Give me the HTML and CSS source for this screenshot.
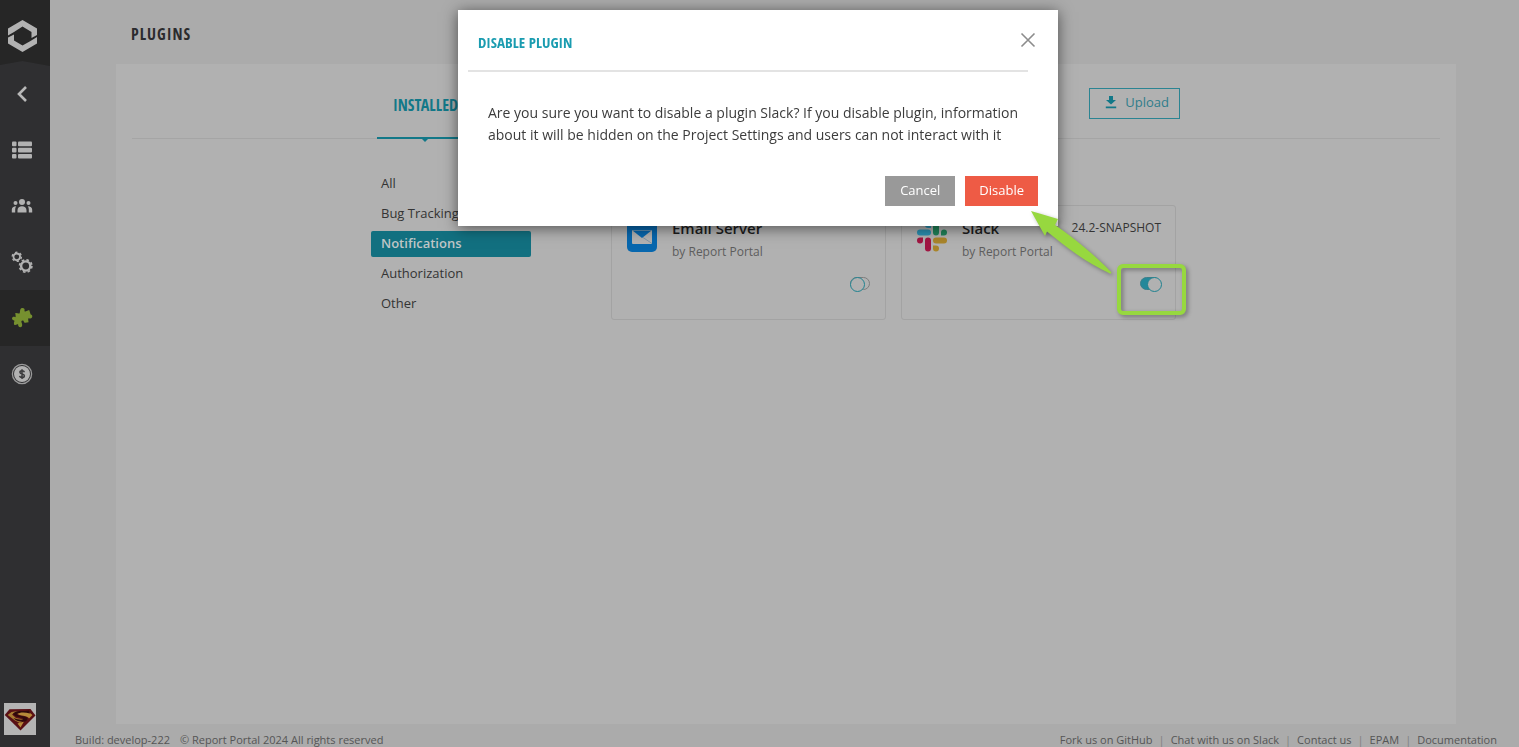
FILE: index.html
```
<!DOCTYPE html>
<html lang="en">
<head>
<meta charset="utf-8">
<title>Plugins</title>
<link rel="stylesheet" href="styles.css">
</head>
<body>
<div class="app">
  <nav class="sidebar" aria-label="Main">
    <a class="logo" href="#" aria-label="Home">
      <svg width="30" height="34" viewBox="0 0 30 34" fill="#b2b2b2"><path d="M0 9.600 14.500 1 29 9.600v6.400L23.500 19v-6L14.500 7.500 6 13 0 16.500z"/><path d="M29 24.500 14.500 33 0 24.500V18.500L6 15.500v6L14.500 26.500 22.500 22 29 18z"/></svg>
    </a>
    <a class="side-item" href="#" aria-label="Back"><svg width="12" height="18" viewBox="0 0 12 18" fill="none" stroke="#b8b8b8" stroke-width="2.600"><path d="M10 2 3 9l7 7"/></svg></a>
    <a class="side-item" href="#" aria-label="Projects"><svg width="22" height="18" viewBox="0 0 22 18" fill="#b2b2b2"><rect x="1" y=".6" width="4.500" height="4.600" rx="1"/><rect x="7" y=".6" width="14" height="4.600" rx="1"/><rect x="1" y="6.800" width="4.500" height="4.600" rx="1"/><rect x="7" y="6.800" width="14" height="4.600" rx="1"/><rect x="1" y="13" width="4.500" height="4.600" rx="1"/><rect x="7" y="13" width="14" height="4.600" rx="1"/></svg></a>
    <a class="side-item" href="#" aria-label="Users"><svg width="22" height="16" viewBox="0 0 22 16" fill="#b2b2b2"><circle cx="11" cy="4" r="3"/><circle cx="4.500" cy="5" r="2"/><circle cx="17.500" cy="5" r="2"/><path d="M6.500 14.500v-2.300c0-2.600 2-4 4.500-4s4.500 1.400 4.500 4v2.300zM.8 14.500v-2.700c0-2 1.600-3.500 4.400-3.500-.6.900-1 2-1 3.500v2.700zM21.200 14.500v-2.700c0-2-1.600-3.500-4.400-3.500.6.900 1 2 1 3.500v2.700z"/></svg></a>
    <a class="side-item" href="#" aria-label="Settings"><svg width="22" height="22" viewBox="0 0 22 22" fill="none" stroke="#b2b2b2"><circle cx="5.800" cy="5.800" r="3.300" stroke-width="1.800"/><circle cx="5.800" cy="5.800" r="4.600" stroke-width="1.400" stroke-dasharray="2.400 2.417"/><circle cx="14.700" cy="15" r="4.600" stroke-width="2.400"/><circle cx="14.700" cy="15" r="6.200" stroke-width="1.600" stroke-dasharray="2.600 2.269"/></svg></a>
    <a class="side-item active" href="#" aria-label="Plugins"><svg width="22" height="22" viewBox="0 0 22 22" fill="#76902f"><path d="M9 4c.2-1.300.6-2.700 2.200-2.900 1.800-.2 2.800 1 2.300 2.600-.1.600.2.900.8.700l3.900-1.500 1.300 4c.2.700.6.600 1 .9 1.200.9 1.100 3-.3 3.500-1.200.5-2-.5-2.700 0-.7.700 0 2.600.1 4-1.800.4-3.300.8-4.200.3-.9-.6-.2-2-1.600-2.200-1.600-.1-1.600 1.300-1.200 2.200.4 1.400 1 2.600.2 3.900-.7 1-2.600.9-3.300-.2-.5-.9 0-1.900-.6-2.100-1-.3-2.100.8-3.500.9-.5-1.400-.7-2.700-.2-3.400.3-.5.500-.8-.2-1.100-1.500-.4-2.200-1.200-1.900-2.500.4-1.600 2-1.700 2.900-1 .6.400.8-.3.600-1.300L4.300 6c1.400-.3 3.500.9 4.300.2C9 5.600 8.900 4.900 9 4z"/></svg></a>
    <a class="side-item" href="#" aria-label="Billing"><svg width="22" height="22" viewBox="0 0 22 22"><circle cx="11" cy="11" r="9.600" fill="none" stroke="#9b9b9b" stroke-width="1.300"/><circle cx="11" cy="11" r="8" fill="#b2b2b2"/><path d="M13.400 9.200c-.3-1.100-1.200-1.500-2.300-1.500-1.300 0-2.200.5-2.200 1.600 0 2.300 4.500 1.100 4.500 3.500 0 1.200-1 1.800-2.300 1.800s-2.300-.5-2.500-1.700M11 6.200v9.700" fill="none" stroke="#3b3b3d" stroke-width="1.500"/></svg></a>
    <a class="avatar" href="#" aria-label="Profile"><svg width="32" height="32" viewBox="0 0 32 32"><rect width="32" height="32" fill="#b4b4b4"/><path d="M5.500 6.300 26.500 6 31.500 12.500 16.500 27.500.7 12z" fill="#591015"/><path d="M7.500 9 14 8 8 11.500 12 15 20 16.500 16 20 11 17.500 3.700 12z" fill="#a77b31"/><path d="M13 8.500 24 8.500 28.500 12 25 15.500C24 12.500 15 13 13 10.500zM13.500 20.500 20 18.500 16.500 24.500z" fill="#b78939"/><path d="M9 10.500C14 6.500 18 9 25 7.500l1 3C20 9 16 9 12.500 11.500 17 14 24 12.500 23.500 16c-1 4-8 3-12 1l-2-2c5 1.500 9 2.500 9.500.8C19 14 10 14.500 9 10.500z" fill="#30090c"/></svg></a>
  </nav>

  <div class="page">
    <h1 class="page-title">PLUGINS</h1>
    <main class="panel">
      <div class="panel-head">
        <div class="wrap head-row">
          <a class="tab" href="#">INSTALLED</a>
          <button class="upload" type="button">
            <svg width="12" height="14" viewBox="0 0 12 14" fill="#127888"><path d="M4 1h4v4h3L6 9.500 1 5h3zM.8 11.500h10.400v1.800H.8z"/></svg>
            Upload
          </button>
        </div>
      </div>
      <div class="wrap content">
        <nav class="filters" aria-label="Plugin types">
          <a class="filter" href="#">All</a>
          <a class="filter" href="#">Bug Tracking</a>
          <a class="filter selected" href="#">Notifications</a>
          <a class="filter" href="#">Authorization</a>
          <a class="filter" href="#">Other</a>
        </nav>
        <section class="cards">
          <article class="card">
            <svg class="card-icon" width="30" height="32" viewBox="0 0 30 32"><rect width="30" height="32" rx="5" fill="#0767ae"/><rect x="5" y="10" width="20" height="14" rx="1" fill="#b2b2b2"/><path d="M5.500 10.500 15 18l9.500-7.500z" fill="#0767ae"/><path d="m16 17.500 9 6" stroke="#8196a6"/></svg>
            <div class="card-text">
              <h2 class="card-name">Email Server</h2>
              <p class="card-author">by Report Portal</p>
            </div>
            <label class="switch"><input type="checkbox" aria-label="Email Server"></label>
          </article>
          <article class="card">
            <svg class="card-icon" width="30" height="32" viewBox="0 0 30 32"><g fill="#2b8fb0"><rect y="9.500" width="14" height="6" rx="3"/><path d="M14 8h-3a3 3 0 1 1 3-3z"/></g><g fill="#1f8258"><rect x="16" y="2" width="6" height="13.500" rx="3"/><path d="M24 15.500v-3a3 3 0 1 1 3 3z"/></g><g fill="#a9852a"><rect x="16" y="17.500" width="14" height="6" rx="3"/><path d="M16 25.500h3a3 3 0 1 1-3 3z"/></g><g fill="#a01642"><rect x="8" y="17.500" width="6" height="14" rx="3"/><path d="M6 17.500v3a3 3 0 1 1-3-3z"/></g></svg>
            <div class="card-text">
              <h2 class="card-name">Slack</h2>
              <p class="card-author">by Report Portal</p>
            </div>
            <span class="version">24.2-SNAPSHOT</span>
            <label class="switch"><input type="checkbox" aria-label="Slack" checked></label>
            <svg class="callout" width="166" height="120" viewBox="0 0 166 120">
              <path d="M7 6 34 14 31 20 C51 34 71 50 87.500 67.500 Q87 69 86 68.500 C63 58 43 43 23 26.500L21 31Z" fill="#97d83f"/>
              <rect x="95" y="61" width="65" height="47" rx="4" fill="none" stroke="#97d83f" stroke-width="4"/>
            </svg>
          </article>
        </section>
      </div>
    </main>
    <footer class="footer">
      <span>Build: develop-222</span>
      <span>© Report Portal 2024 All rights reserved</span>
      <ul class="links">
        <li><a href="#">Fork us on GitHub</a></li>
        <li><a href="#">Chat with us on Slack</a></li>
        <li><a href="#">Contact us</a></li>
        <li><a href="#">EPAM</a></li>
        <li><a href="#">Documentation</a></li>
      </ul>
    </footer>
  </div>
</div>

<div class="modal-layer">
  <div class="modal" role="dialog" aria-modal="true" aria-labelledby="modal-title">
    <header class="modal-head">
      <h2 class="modal-title" id="modal-title">DISABLE PLUGIN</h2>
      <button class="close" type="button" aria-label="Close"><svg width="16" height="16" viewBox="0 0 16 16" stroke="#8c8c8c" stroke-width="1.600"><path d="m1.500 1.500 13 13M14.500 1.500l-13 13"/></svg></button>
    </header>
    <p class="modal-text">Are you sure you want to disable a plugin Slack? If you disable plugin, information about it will be hidden on the Project Settings and users can not interact with it</p>
    <div class="modal-actions">
      <button class="btn cancel" type="button">Cancel</button>
      <button class="btn danger" type="button">Disable</button>
    </div>
  </div>
</div>
</body>
</html>
```
FILE: styles.css
```
* { box-sizing: border-box; }
body {
  margin: 0;
  background: #ababab;
  color: #343434;
  font: 13px/20px "Open Sans", "Noto Sans", sans-serif;
}
a { color: inherit; text-decoration: none; }
button { font: inherit; cursor: pointer; }
h1, h2, p, ul { margin: 0; padding: 0; }
svg { display: block; flex: none; }

.app { display: flex; min-height: 100vh; }

.sidebar {
  display: flex;
  flex-direction: column;
  flex: none;
  width: 50px;
  background: #2f2f31;
}
.logo {
  height: 66px;
  padding: 19px 0 0 8px;
  background: #262626;
  clip-path: polygon(0 0, 100% 0, 100% 100%, 45% 61px, 0 65px);
}
.side-item {
  display: flex;
  align-items: center;
  justify-content: center;
  height: 56px;
  padding-right: 6px;
}
.side-item.active { background: #262626; }
.avatar { margin: auto 0 12px 4px; }

.page {
  display: flex;
  flex: 1;
  flex-direction: column;
  min-width: 0;
}
.page-title, .tab, .modal-title {
  font-family: "Open Sans Condensed", "Roboto Condensed", "Liberation Sans Narrow", "Open Sans", sans-serif;
  font-weight: 700;
}
.page-title {
  padding: 24px 0 20px 81px;
  font-size: 16px;
  line-height: 20px;
  letter-spacing: 1px;
  color: #2b2b2e;
}
.panel {
  flex: 1;
  margin: 0 63px 0 66px;
  background: #b1b1b1;
}
.panel-head {
  height: 75px;
  margin: 0 16px;
  border-bottom: 1px solid #a5a5a5;
}
.wrap { width: 830px; margin: 0 auto; }
.head-row {
  display: flex;
  align-items: center;
  justify-content: space-between;
  height: 75px;
  padding: 0 21px 0 6px;
}
.tab {
  position: relative;
  height: 75px;
  padding: 0 16px;
  border-bottom: 2px solid #127888;
  color: #127888;
  font-size: 16px;
  line-height: 82px;
}
.tab::after {
  content: "";
  position: absolute;
  top: 100%;
  left: 50%;
  margin-left: -5px;
  border: 5px solid transparent;
  border-top-color: #127888;
  border-bottom: 0;
}
.upload {
  display: flex;
  align-items: center;
  gap: 8px;
  height: 31px;
  margin-top: 3px;
  padding: 0 10px 2px 15px;
  border: 1px solid #2b8492;
  background: none;
  color: #2f7d8b;
}

.content {
  display: flex;
  gap: 80px;
  padding: 32px 25px 0 0;
}
.filters {
  display: flex;
  flex-direction: column;
  gap: 4px;
  width: 160px;
}
.filter {
  height: 26px;
  padding: 0 10px;
  line-height: 24px;
  border-radius: 2px;
}
.filter.selected {
  background: #127080;
  color: #bfc5c6;
  font-weight: 600;
}
.cards {
  display: grid;
  flex: 1;
  grid-template-columns: 1fr 1fr;
  gap: 15px;
  padding-top: 34px;
}
.card {
  position: relative;
  display: flex;
  gap: 15px;
  height: 115px;
  padding: 14px;
  border: 1px solid #a3a3a3;
  border-radius: 3px;
}
.card-icon { margin-left: 1px; }
.card-text { flex: 1; }
.card-name {
  font-size: 15px;
  font-weight: 600;
  line-height: 16px;
  color: #1d1d1d;
}
.card-author {
  margin-top: 6px;
  font-size: 12px;
  color: #5d5d5d;
}
.version { font-size: 12px; line-height: 16px; }
.switch {
  position: absolute;
  right: 15px;
  bottom: 29px;
}
.switch input {
  display: block;
  appearance: none;
  width: 20px;
  height: 13px;
  margin: 0;
  border: 1px solid #7d7d7d;
  border-radius: 7px;
}
.switch input::before {
  content: "";
  display: block;
  width: 13px;
  height: 13px;
  margin: -1px;
  border: 1px solid #1f8290;
  border-radius: 50%;
  background: #b1b1b1;
}
.switch input:checked { background: #24889a; border-color: #3c7f8a; }
.switch input:checked::before { margin-left: 6px; }
.callout {
  position: absolute;
  top: -1px;
  left: 122px;
  z-index: 20;
  pointer-events: none;
  filter: drop-shadow(2px 2px 2px rgba(0, 0, 0, .35));
}

.footer {
  display: flex;
  gap: 10px;
  padding: 8px 22px 0 25px;
  font-size: 11px;
  line-height: 15px;
  color: #555;
}
.links {
  display: flex;
  margin-left: auto;
  list-style: none;
}
.links li + li::before {
  content: "|";
  margin: 0 6px;
  color: #808080;
}

.modal-layer {
  position: fixed;
  inset: 0;
  z-index: 10;
  display: flex;
  align-items: flex-start;
  justify-content: center;
  padding: 10px 3px 0 0;
}
.modal {
  width: 600px;
  padding: 0 20px 20px;
  background: #fff;
  box-shadow: 0 2px 14px rgba(0, 0, 0, .55);
}
.modal-head {
  display: flex;
  align-items: center;
  justify-content: space-between;
  height: 62px;
  margin: 0 10px 0 -10px;
  padding-left: 10px;
  border-bottom: 2px solid #e3e3e3;
}
.modal-title {
  padding-top: 3px;
  font-size: 15px;
  line-height: 20px;
  color: #1a9cb0;
}
.close {
  margin-right: -8px;
  padding: 0;
  border: 0;
  background: none;
}
.modal-text {
  padding: 30px 10px 0;
  font-size: 14px;
  line-height: 22px;
  color: #3c3c3c;
}
.modal-actions {
  display: flex;
  justify-content: flex-end;
  gap: 10px;
  padding-top: 30px;
}
.btn {
  height: 30px;
  padding: 0 14px 2px;
  border: 0;
  color: #fff;
}
.cancel { padding: 0 15px 2px; background: #999; }
.danger { background: #ee5b45; }
```
